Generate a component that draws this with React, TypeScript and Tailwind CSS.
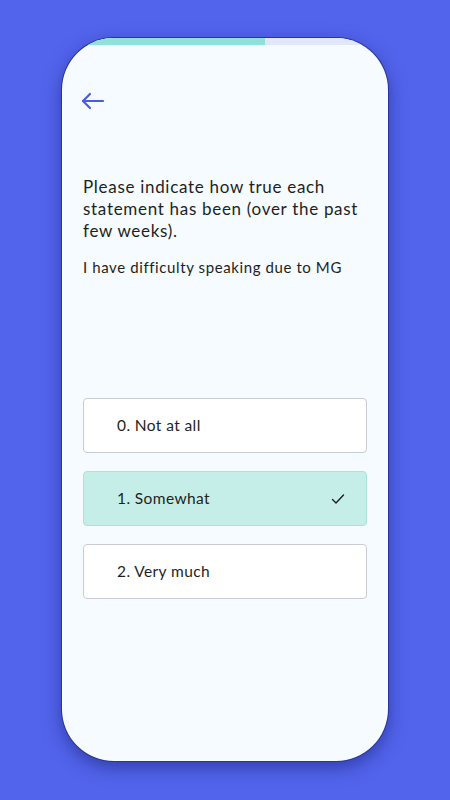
import React, { useState } from 'react';

const options = ['0. Not at all', '1. Somewhat', '2. Very much'];

export default function App() {
  const [selected, setSelected] = useState(1);

  return (
    <div className="w-[450px] h-[800px] bg-[#5264ec] flex justify-center pt-[38px] font-['Lato',sans-serif]">
      <div className="w-[326px] h-[723px] rounded-[52px] bg-[#f5fbfe] overflow-hidden flex flex-col shadow-[0_6px_18px_rgba(20,30,110,0.55)] ring-1 ring-[#2a3595]">
        {/* progress */}
        <div className="h-[7px] w-full bg-[#e1e6fb] shrink-0">
          <div className="h-full w-[203px] bg-[#8fe1d9]" />
        </div>

        <div className="px-[21px] pt-[44px]">
          <button className="w-[24px] h-[24px] -ml-[4px] text-[#4a5ce2]">
            <svg width="26" height="24" viewBox="0 0 26 24" fill="none" stroke="currentColor" strokeWidth="2.2" strokeLinecap="round" strokeLinejoin="round">
              <path d="M24 12H4" />
              <path d="M11 5l-7 7 7 7" />
            </svg>
          </button>

          <p className="mt-[57px] text-[17px] leading-[22px] text-[#1f1f22] tracking-[0.7px]">
            Please indicate how true each statement has been (over the past few weeks).
          </p>
          <p className="mt-[15px] text-[15px] leading-[20px] text-[#1f1f22] tracking-[0.6px]">
            I have difficulty speaking due to MG
          </p>

          <div className="mt-[121px] flex flex-col gap-[18px]">
            {options.map((o, i) => (
              <button
                key={o}
                onClick={() => setSelected(i)}
                className={
                  i === selected
                    ? 'h-[55px] w-[284px] rounded-[4px] border border-[#a8e3dc] bg-[#c5eee9] flex items-center justify-between pl-[33px] pr-[20px] text-[15.5px] text-[#1f1f22] tracking-[0.4px]'
                    : 'h-[55px] w-[284px] rounded-[4px] border border-[#c9ccd6] bg-white flex items-center justify-between pl-[33px] pr-[20px] text-[15.5px] text-[#1f1f22] tracking-[0.4px]'
                }
              >
                <span>{o}</span>
                {i === selected && (
                  <svg width="16" height="16" viewBox="0 0 16 16" fill="none" stroke="#1f1f22" strokeWidth="1.4" strokeLinecap="round" strokeLinejoin="round">
                    <path d="M2.5 8.5l3.5 3.5 7.5-8" />
                  </svg>
                )}
              </button>
            ))}
          </div>
        </div>
      </div>
    </div>
  );
}
